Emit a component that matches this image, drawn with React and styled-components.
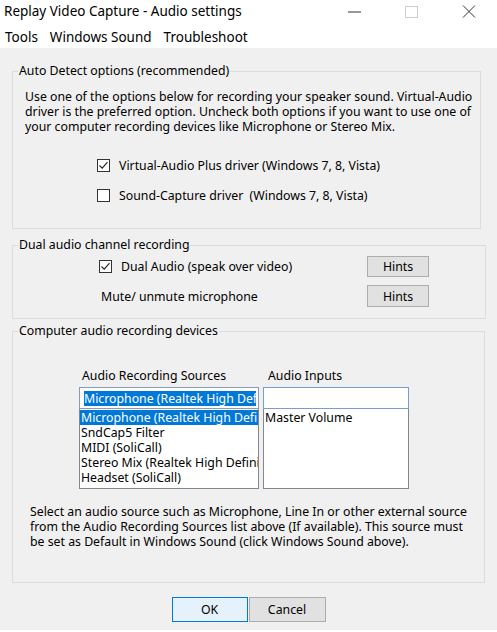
import React from 'react';
import styled, { createGlobalStyle } from 'styled-components';

const GlobalStyle = createGlobalStyle`
  html, body {
    margin: 0;
    padding: 0;
    background: #ffffff;
  }
  body {
    font-family: "Noto Sans", "Liberation Sans", sans-serif;
    color: #000;
  }
`;

const Window = styled.div`
  width: 497px;
  height: 632px;
  display: flex;
  flex-direction: column;
  background: #fff;
  overflow: hidden;
`;

const TitleBar = styled.div`
  height: 25px;
  display: flex;
  align-items: stretch;
  padding-left: 4px;
  font-size: 13.5px;
`;

const Title = styled.div`
  flex: 1;
  white-space: nowrap;
  line-height: 23px;
`;

const WinBtn = styled.div`
  width: 57px;
  height: 23px;
  display: flex;
  align-items: center;
  justify-content: center;
`;

const MenuBar = styled.div`
  height: 23px;
  display: flex;
  align-items: center;
  gap: 12px;
  padding-left: 5px;
  font-size: 13.5px;
`;

const Body = styled.div`
  flex: 1;
  background: #f0f0f0;
  display: flex;
  flex-direction: column;
  padding: 15px 0 0 12px;
  margin-bottom: 2px;
  font-size: 12.3px;
`;

const Group = styled.fieldset`
  margin: 0 0 ${p => p.mb || 0}px 0;
  width: ${p => p.w}px;
  box-sizing: border-box;
  border: 1px solid #dcdcdc;
  padding: 0;
  min-width: 0;
`;

const Legend = styled.legend`
  padding: 0 1px;
  margin-left: 5px;
  line-height: 16px;
  font-size: 12.3px;
`;

const Inner = styled.div`
  padding: ${p => p.pad};
`;

const Para = styled.p`
  margin: ${p => p.mt || 0}px 0 0 ${p => p.indent || 0}px;
  line-height: 15px;
  white-space: nowrap;
`;

const CheckRow = styled.label`
  display: flex;
  align-items: center;
  gap: 9px;
  height: 20px;
  padding-left: ${p => p.indent || 0}px;
  margin-top: ${p => p.mt || 0}px;
  white-space: nowrap;
`;

const Box = styled.span`
  width: 13px;
  height: 13px;
  box-sizing: border-box;
  border: 1px solid #333;
  background: #fff;
  display: flex;
  align-items: center;
  justify-content: center;
  flex-shrink: 0;
`;

const HintGrid = styled.div`
  display: grid;
  grid-template-columns: 1fr 62px;
  row-gap: 8px;
  align-items: center;
`;

const Plain = styled.span`
  padding-left: 2px;
  white-space: nowrap;
`;

const Button = styled.button`
  font: inherit;
  font-size: 12.3px;
  height: ${p => p.h || 22}px;
  width: ${p => p.w}px;
  padding: 0;
  color: #000;
  background: ${p => (p.primary ? '#e5f1fb' : '#e1e1e1')};
  border: 1px solid ${p => (p.primary ? '#0078d7' : '#adadad')};
  box-sizing: border-box;
`;

const Devices = styled.div`
  display: flex;
  gap: 4px;
  padding-left: 66px;
  margin-top: 29px;
`;

const Column = styled.div`
  width: ${p => p.w}px;
  display: flex;
  flex-direction: column;
`;

const ColLabel = styled.div`
  line-height: 16px;
  padding-left: ${p => p.indent}px;
  margin-bottom: 3px;
  white-space: nowrap;
`;

const EditBox = styled.div`
  height: 22px;
  box-sizing: border-box;
  border: 1px solid ${p => (p.focus ? '#7a9cd3' : '#8a9bb3')};
  background: #fff;
  display: flex;
  align-items: center;
  padding: 0 2px 0 4px;
  overflow: hidden;
  white-space: nowrap;
`;

const Selected = styled.span`
  background: #0078d7;
  color: #fff;
  line-height: 15px;
  white-space: nowrap;
  overflow: hidden;
`;

const ListBox = styled.div`
  height: 80px;
  box-sizing: border-box;
  border: 1px solid #828790;
  border-top: none;
  background: #fff;
  overflow: hidden;
  padding-top: 1px;
`;

const Item = styled.div`
  height: 15px;
  line-height: 15px;
  padding-left: 1px;
  white-space: nowrap;
  overflow: hidden;
  background: ${p => (p.sel ? '#0078d7' : 'transparent')};
  color: ${p => (p.sel ? '#fff' : '#000')};
`;

const Footer = styled.div`
  display: flex;
  justify-content: center;
  gap: 1px;
  margin-top: 14px;
  padding-right: 12px;
`;

const Check = () => (
  <svg width="11" height="11" viewBox="0 0 11 11">
    <path d="M1.5 5.5 L4.2 8.2 L9.5 2.2" fill="none" stroke="#222" strokeWidth="1.1" />
  </svg>
);

const CheckBox = ({ checked }) => <Box>{checked && <Check />}</Box>;

export default function App() {
  return (
    <Window>
      <GlobalStyle />
      <TitleBar>
        <Title>Replay Video Capture - Audio settings</Title>
        <WinBtn>
          <svg width="14" height="2"><path d="M0 1 H13" stroke="#333" strokeWidth="1" /></svg>
        </WinBtn>
        <WinBtn>
          <svg width="13" height="12"><rect x="0.5" y="0.5" width="12" height="11" fill="none" stroke="#cccccc" /></svg>
        </WinBtn>
        <WinBtn>
          <svg width="14" height="13"><path d="M1 0.5 L13 12.5 M13 0.5 L1 12.5" stroke="#333" strokeWidth="1" /></svg>
        </WinBtn>
      </TitleBar>
      <MenuBar>
        <span>Tools</span>
        <span>Windows Sound</span>
        <span>Troubleshoot</span>
      </MenuBar>
      <Body>
        <Group w={469} mb={8}>
          <Legend>Auto Detect options (recommended)</Legend>
          <Inner pad="0 0 23px 12px">
            <Para mt={10}>
              Use one of the options below for recording your speaker sound. Virtual-Audio<br />
              driver is the preferred option. Uncheck both options if you want to use one of<br />
              your computer recording devices like Microphone or Stereo Mix.
            </Para>
            <CheckRow indent={72} mt={21}>
              <CheckBox checked />
              Virtual-Audio Plus driver (Windows 7, 8, Vista)
            </CheckRow>
            <CheckRow indent={72} mt={10}>
              <CheckBox />
              Sound-Capture driver&nbsp; (Windows 7, 8, Vista)
            </CheckRow>
          </Inner>
        </Group>

        <Group w={474} mb={4}>
          <Legend>Dual audio channel recording</Legend>
          <Inner pad="3px 56px 11px 86px">
            <HintGrid>
              <CheckRow>
                <CheckBox checked />
                Dual Audio (speak over video)
              </CheckRow>
              <Button w={62} h={21}>Hints</Button>
              <Plain>Mute/ unmute microphone</Plain>
              <Button w={62} h={22}>Hints</Button>
            </HintGrid>
          </Inner>
        </Group>

        <Group w={473}>
          <Legend>Computer audio recording devices</Legend>
          <Inner pad="0 0 33px 0">
            <Devices>
              <Column w={180}>
                <ColLabel indent={3}>Audio Recording Sources</ColLabel>
                <EditBox>
                  <Selected>Microphone (Realtek High Defi</Selected>
                </EditBox>
                <ListBox>
                  <Item sel>Microphone (Realtek High Definition Audio)</Item>
                  <Item>SndCap5 Filter</Item>
                  <Item>MIDI (SoliCall)</Item>
                  <Item>Stereo Mix (Realtek High Definition Audio)</Item>
                  <Item>Headset (SoliCall)</Item>
                </ListBox>
              </Column>
              <Column w={146}>
                <ColLabel indent={5}>Audio Inputs</ColLabel>
                <EditBox focus />
                <ListBox>
                  <Item>Master Volume</Item>
                </ListBox>
              </Column>
            </Devices>
            <Para mt={15} indent={17}>
              Select an audio source such as Microphone, Line In or other external source<br />
              from the Audio Recording Sources list above (If available). This source must<br />
              be set as Default in Windows Sound (click Windows Sound above).
            </Para>
          </Inner>
        </Group>

        <Footer>
          <Button primary w={76} h={25}>OK</Button>
          <Button w={77} h={25}>Cancel</Button>
        </Footer>
      </Body>
    </Window>
  );
}
